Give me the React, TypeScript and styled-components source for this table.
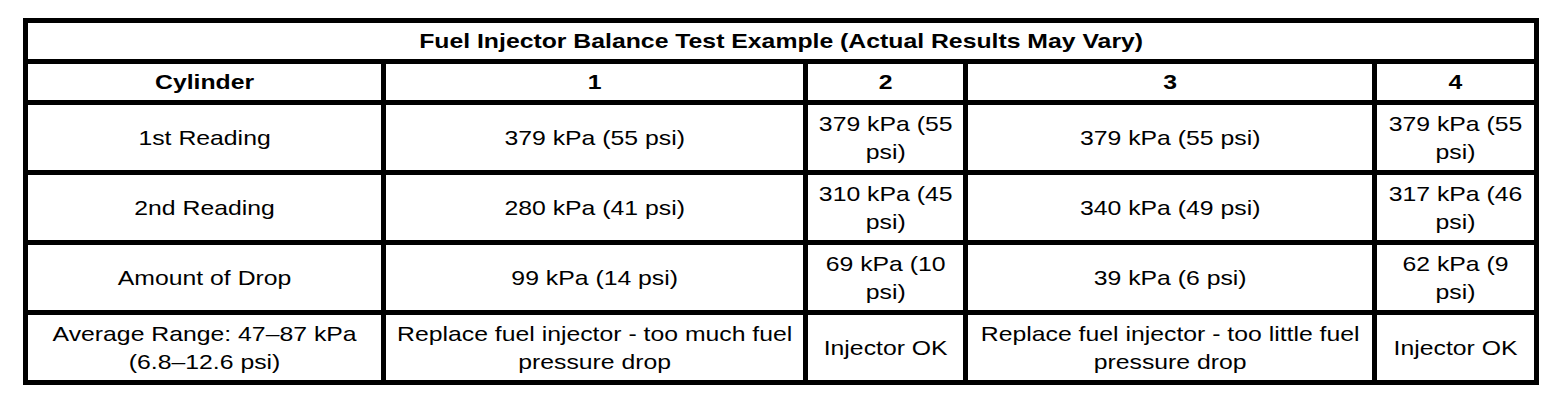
import React from "react";
import styled, { createGlobalStyle } from "styled-components";

const STRETCH = 1.18;

const GlobalStyle = createGlobalStyle`
  html, body {
    margin: 0;
    padding: 0;
    background: #ffffff;
  }
  body {
    font-family: "Liberation Sans", Arial, sans-serif;
    color: #000000;
  }
`;

const Page = styled.div`
  padding: 18px 0 0 23px;
`;

const Table = styled.div`
  display: grid;
  width: max-content;
  grid-template-columns: 353px 417px 155px 404px 157px;
  grid-template-rows: 36px 36px repeat(4, 65px);
  gap: 5px;
  padding: 5px;
  background: #000000;
`;

const Cell = styled.div<{ $bold?: boolean; $full?: boolean }>`
  display: flex;
  align-items: center;
  justify-content: center;
  background: #ffffff;
  font-size: 21px;
  line-height: 28px;
  font-weight: ${(p) => (p.$bold ? 700 : 400)};
  grid-column: ${(p) => (p.$full ? "1 / -1" : "auto")};
`;

const Stretch = styled.span`
  display: block;
  flex: none;
  width: calc(100% / ${STRETCH} - 8px);
  text-align: center;
  transform: scaleX(${STRETCH});
  transform-origin: center center;
`;

const headers = ["Cylinder", "1", "2", "3", "4"];

const rows: string[][] = [
  [
    "1st Reading",
    "379 kPa (55 psi)",
    "379 kPa (55 psi)",
    "379 kPa (55 psi)",
    "379 kPa (55 psi)",
  ],
  [
    "2nd Reading",
    "280 kPa (41 psi)",
    "310 kPa (45 psi)",
    "340 kPa (49 psi)",
    "317 kPa (46 psi)",
  ],
  [
    "Amount of Drop",
    "99 kPa (14 psi)",
    "69 kPa (10 psi)",
    "39 kPa (6 psi)",
    "62 kPa (9 psi)",
  ],
  [
    "Average Range: 47–87 kPa (6.8–12.6 psi)",
    "Replace fuel injector - too much fuel pressure drop",
    "Injector OK",
    "Replace fuel injector - too little fuel pressure drop",
    "Injector OK",
  ],
];

export default function App() {
  return (
    <>
      <GlobalStyle />
      <Page>
        <Table>
          <Cell $bold $full>
            <Stretch>
              Fuel Injector Balance Test Example (Actual Results May Vary)
            </Stretch>
          </Cell>
          {headers.map((h) => (
            <Cell key={h} $bold>
              <Stretch>{h}</Stretch>
            </Cell>
          ))}
          {rows.map((row, ri) =>
            row.map((text, ci) => (
              <Cell key={`${ri}-${ci}`}>
                <Stretch>{text}</Stretch>
              </Cell>
            ))
          )}
        </Table>
      </Page>
    </>
  );
}
